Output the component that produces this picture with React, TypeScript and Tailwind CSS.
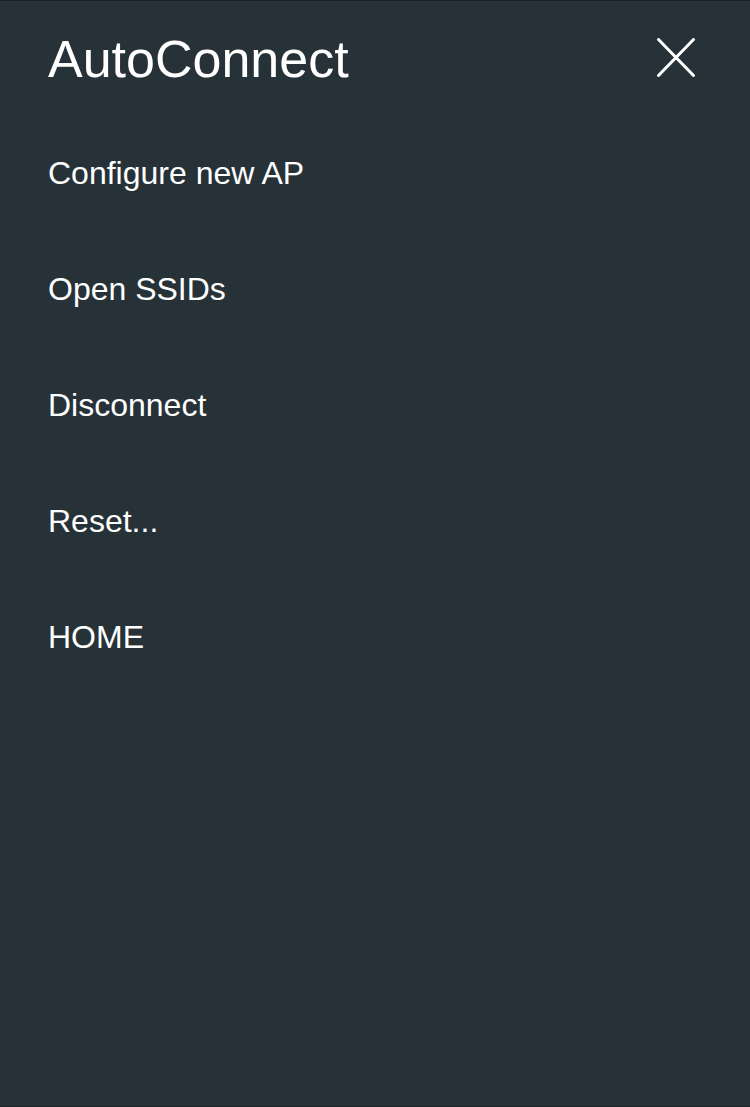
const items = ['Configure new AP', 'Open SSIDs', 'Disconnect', 'Reset...', 'HOME'];

export default function App() {
    return (
        <div
            className="h-screen w-full bg-[#263238] text-white border-y border-[#1c2327] overflow-hidden"
            style={{ fontFamily: '"Liberation Sans", Arial, sans-serif' }}
        >
            {/* Header */}
            <div className="flex items-start justify-between pl-[48px] pr-[55px] h-[114px]">
                <h1 className="pt-[28px] text-[52px] leading-[60px] font-normal">AutoConnect</h1>
                <button className="mt-[37px] w-[38px] h-[39px]" aria-label="close">
                    <svg width="38" height="39" viewBox="0 0 38 39" fill="none" stroke="white" strokeWidth="3" strokeLinecap="round">
                        <line x1="1.5" y1="1.5" x2="36.5" y2="37.5" />
                        <line x1="36.5" y1="1.5" x2="1.5" y2="37.5" />
                    </svg>
                </button>
            </div>

            {/* Menu */}
            <nav className="flex flex-col">
                {items.map((item) => (
                    <a key={item} href="#" className="block pl-[48px] py-[40px] text-[32px] leading-[36px]">
                        {item}
                    </a>
                ))}
            </nav>
        </div>
    );
}
